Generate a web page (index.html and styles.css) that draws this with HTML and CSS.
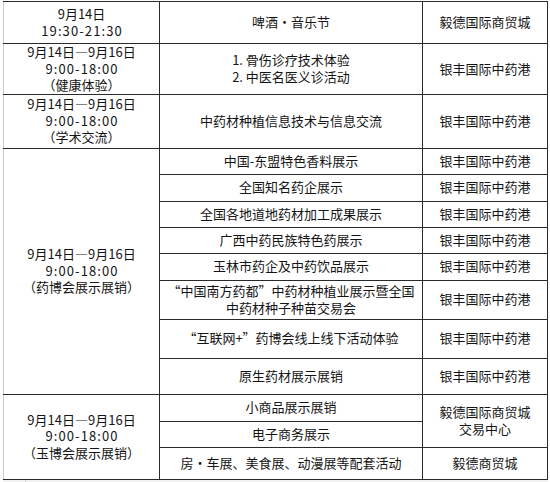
FILE: index.html
```html
<!DOCTYPE html>
<html lang="zh-CN">
<head>
<meta charset="utf-8">
<title>活动安排</title>
<link rel="stylesheet" href="styles.css">
</head>
<body>
<div class="sheet">
<table class="schedule">
<colgroup><col class="c-time"><col class="c-event"><col class="c-venue"></colgroup>
<tbody>
<tr class="r42"><td>9月14日<br><span class="t">19:30-21:30</span></td><td>啤酒·音乐节</td><td>毅德国际商贸城</td></tr>
<tr class="r50"><td>9月14日—9月16日<br><span class="t">9:00-18:00</span><br>（健康体验）</td><td>1. 骨伤诊疗技术体验<br>2. 中医名医义诊活动</td><td>银丰国际中药港</td></tr>
<tr class="r54"><td>9月14日—9月16日<br><span class="t">9:00-18:00</span><br>（学术交流）</td><td>中药材种植信息技术与信息交流</td><td>银丰国际中药港</td></tr>
<tr class="r26"><td rowspan="8">9月14日—9月16日<br><span class="t">9:00-18:00</span><br>（药博会展示展销）</td><td>中国-东盟特色香料展示</td><td>银丰国际中药港</td></tr>
<tr class="r27"><td>全国知名药企展示</td><td>银丰国际中药港</td></tr>
<tr class="r26"><td>全国各地道地药材加工成果展示</td><td>银丰国际中药港</td></tr>
<tr class="r26"><td>广西中药民族特色药展示</td><td>银丰国际中药港</td></tr>
<tr class="r27"><td>玉林市药企及中药饮品展示</td><td>银丰国际中药港</td></tr>
<tr class="r39"><td>“中国南方药都”中药材种植业展示暨全国<br>中药材种子种苗交易会</td><td>银丰国际中药港</td></tr>
<tr class="r39"><td>“互联网+”药博会线上线下活动体验</td><td>银丰国际中药港</td></tr>
<tr class="r36"><td>原生药材展示展销</td><td>银丰国际中药港</td></tr>
<tr class="r27"><td rowspan="3">9月14日—9月16日<br><span class="t">9:00-18:00</span><br>（玉博会展示展销）</td><td>小商品展示展销</td><td rowspan="2">毅德国际商贸城<br>交易中心</td></tr>
<tr class="r26"><td>电子商务展示</td></tr>
<tr class="r32"><td>房·车展、美食展、动漫展等配套活动</td><td>毅德商贸城</td></tr>
</tbody>
</table>
<div class="below"><span class="gridcell"></span></div>
</div>
</body>
</html>
```
FILE: styles.css
```css
html, body {
  margin: 0;
  padding: 0;
  background: #ffffff;
}
body {
  font-family: "Noto Sans CJK SC", "Noto Sans", sans-serif;
  font-size: 13px;
  color: #141414;
}
.sheet {
  padding: 1px 0 0 3px;
  width: 545px;
}
.schedule {
  border-collapse: collapse;
  table-layout: fixed;
  width: 545px;
}
.c-time { width: 156px; }
.c-event { width: 263px; }
.c-venue { width: 125px; }
.schedule td {
  border: 1px solid #2a2a2a;
  padding: 0;
  text-align: center;
  vertical-align: middle;
  line-height: 16.5px;
  white-space: nowrap;
}
.schedule tr > td:first-child {
  border-left-color: #cfcfcf;
}
.t {
  letter-spacing: 1.1px;
  margin-right: -1.1px;
}
.r26 { height: 26px; }
.r27 { height: 27px; }
.r32 { height: 32px; }
.r36 { height: 36px; }
.r39 { height: 39px; }
.r42 { height: 42px; }
.r50 { height: 50px; }
.r54 { height: 54px; }
.below {
  height: 3px;
  background: #f2f2f2;
  display: flex;
}
.gridcell {
  width: 22px;
  border-right: 1px solid #d4d4d4;
}
```
